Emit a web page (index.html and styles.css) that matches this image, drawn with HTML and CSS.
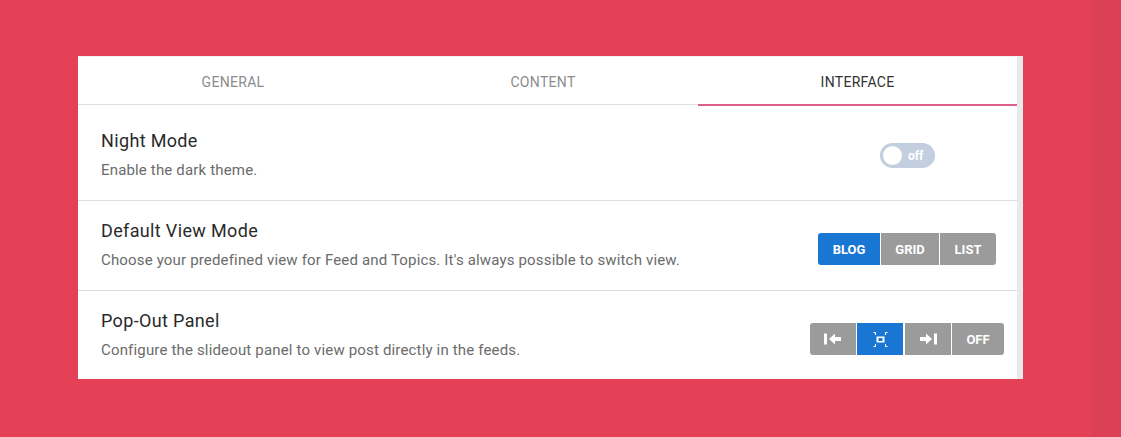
FILE: index.html
```html
<!DOCTYPE html>
<html lang="en">

<head>
    <meta charset="UTF-8">
    <meta name="viewport" content="width=device-width, initial-scale=1.0">
    <title>Settings</title>
    <link rel="stylesheet" href="styles.css">
</head>

<body>

    <div class="panel">
        <div class="panel-body">
            <div class="tabs">
                <div class="tab">GENERAL</div>
                <div class="tab">CONTENT</div>
                <div class="tab active">INTERFACE</div>
            </div>

            <div class="row row-first">
                <div class="row-text">
                    <div class="row-title">Night Mode</div>
                    <div class="row-desc">Enable the dark theme.</div>
                </div>
                <div class="row-control control-toggle">
                    <div class="toggle">
                        <span class="toggle-knob"></span>
                        <span class="toggle-label">off</span>
                    </div>
                </div>
            </div>

            <div class="row">
                <div class="row-text">
                    <div class="row-title">Default View Mode</div>
                    <div class="row-desc">Choose your predefined view for Feed and Topics. It's always possible to switch view.</div>
                </div>
                <div class="row-control control-view">
                    <div class="btn-group">
                        <div class="btn selected btn-blog">BLOG</div>
                        <div class="btn btn-grid">GRID</div>
                        <div class="btn btn-list">LIST</div>
                    </div>
                </div>
            </div>

            <div class="row row-last">
                <div class="row-text">
                    <div class="row-title">Pop-Out Panel</div>
                    <div class="row-desc">Configure the slideout panel to view post directly in the feeds.</div>
                </div>
                <div class="row-control">
                    <div class="btn-group">
                        <div class="btn btn-icon">
                            <svg width="20" height="12" viewBox="0 0 20 12">
                                <path d="M1 .5h3v11H1z M6 6l6-5.500v3.500h6v4h-6v3.500z" fill="#fff"></path>
                            </svg>
                        </div>
                        <div class="btn btn-icon selected">
                            <svg width="17" height="17" viewBox="0 0 17 17">
                                <path d="M4.500 5.500h8v6h-8z M6.500 7v3h4v-3z" fill="#fff" fill-rule="evenodd"></path>
                                <path d="M3.500 4v-2.500h-2M13.500 4v-2.500h2M3.500 13v2.500h-2M13.500 13v2.500h2" stroke="#fff" stroke-width="1" fill="none"></path>
                            </svg>
                        </div>
                        <div class="btn btn-icon">
                            <svg width="20" height="12" viewBox="0 0 20 12">
                                <path d="M19 .5h-3v11h3z M14 6l-6-5.500v3.500H2v4h6v3.500z" fill="#fff"></path>
                            </svg>
                        </div>
                        <div class="btn btn-off">OFF</div>
                    </div>
                </div>
            </div>
        </div>
        <div class="scrollbar"></div>
    </div>

</body>

</html>
```

FILE: styles.css
```css
* {
    box-sizing: border-box;
}

html,
body {
    height: 100%;
}

body {
    margin: 0;
    padding: 56px 98px 0 78px;
    overflow: hidden;
    font-family: Roboto, "Liberation Sans", sans-serif;
    background: linear-gradient(to right, #e44056 1092px, #dc4056 1092px);
}

.panel {
    display: flex;
    height: 323px;
    background-color: #fff;
}

.panel-body {
    flex: 1;
    border-top: 1px solid #f2f2f2;
}

.scrollbar {
    width: 6px;
    background-color: #e9e9ec;
}

.tabs {
    display: grid;
    grid-template-columns: 310px 310px 1fr;
    height: 48px;
    border-bottom: 1px solid #dedede;
}

.tab {
    height: 49px;
    padding-top: 17px;
    text-align: center;
    font-size: 14px;
    line-height: 16px;
    letter-spacing: 0.3px;
    color: #8c8c8c;
}

.tab.active {
    color: #333;
    border-bottom: 2px solid #dc5f8d;
}

.row {
    display: flex;
    height: 90px;
    padding: 19px 13px 0 23px;
    border-bottom: 1px solid #dedede;
}

.row-first {
    height: 96px;
    padding-top: 25px;
}

.row-last {
    height: 88px;
    border-bottom: 0;
}

.row-text {
    flex: 1;
}

.row-title {
    font-size: 18px;
    line-height: 22px;
    letter-spacing: 0.35px;
    color: #2a2a2a;
}

.row-desc {
    margin-top: 8px;
    font-size: 15px;
    line-height: 20px;
    letter-spacing: 0.165px;
    color: #6b6b6b;
}

.row-control {
    display: flex;
    justify-content: center;
    padding-top: 13px;
}

.control-toggle {
    margin-right: 69px;
}

.control-view {
    margin-right: 8px;
}

.toggle {
    display: flex;
    align-items: center;
    width: 55px;
    height: 25px;
    padding: 0 3px;
    border-radius: 13px;
    background-color: #c3cfdf;
}

.toggle-knob {
    width: 19px;
    height: 19px;
    border-radius: 50%;
    background-color: #fff;
}

.toggle-label {
    margin-left: 6px;
    font-size: 12px;
    font-weight: 700;
    color: #fff;
}

.btn-group {
    display: flex;
    gap: 1px;
    height: 32px;
}

.btn {
    display: flex;
    align-items: center;
    justify-content: center;
    font-size: 13px;
    font-weight: 700;
    color: #fff;
    background-color: #9b9b9b;
}

.btn.selected {
    background-color: #1976d2;
}

.btn:first-child {
    border-radius: 3px 0 0 3px;
}

.btn:last-child {
    border-radius: 0 3px 3px 0;
}

.btn-blog {
    width: 62px;
}

.btn-grid {
    width: 58px;
}

.btn-list {
    width: 56px;
}

.btn-icon {
    width: 46px;
}

.btn-icon:nth-child(2) {
    margin-right: 1px;
}

.btn-off {
    width: 52px;
}
```
